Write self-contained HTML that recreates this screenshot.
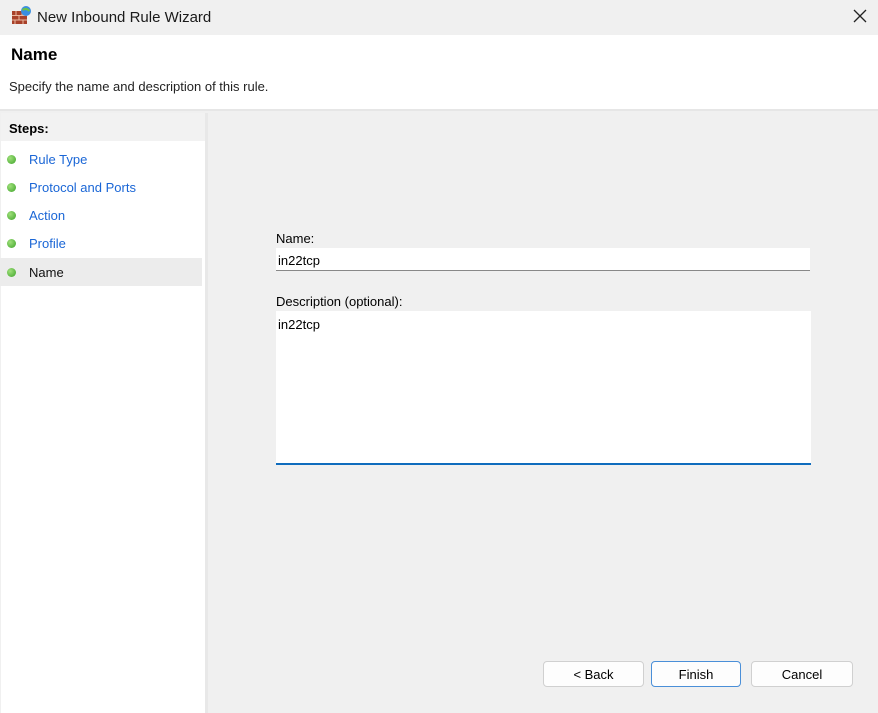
<!DOCTYPE html>
<html><head><style>
*{margin:0;padding:0;box-sizing:border-box}
body{width:878px;height:713px;background:#f0f0f0;font-family:"Liberation Sans",sans-serif;font-size:13px;color:#000;position:relative;overflow:hidden}
.a{position:absolute}
.t{white-space:nowrap}
.step{position:absolute;left:0;width:202px;height:28px;}
.step .d{position:absolute;left:7px;top:10px;width:9px;height:9px;border-radius:50%;background:radial-gradient(circle at 35% 35%,#9fe07a,#3ea32a)}
.step span{position:absolute;left:29px;top:7px;color:#1a66d6;font-size:13px}
.btn{position:absolute;top:661px;height:26px;background:#fdfdfd;border:1px solid #d0d0d0;border-radius:4px;text-align:center;line-height:25px;font-size:13px}
</style></head><body>
<div class="a" style="left:0;top:0;width:878px;height:35px;background:#f0f0f0"></div>
<svg class="a" style="left:11px;top:5px" width="22" height="20" viewBox="0 0 22 20">
<rect x="1" y="6" width="15" height="13" fill="#a8412a"/>
<path d="M1 10.5h15M1 15h15M5 6v4.5M11 6v4.5M8 10.5v4.5M4 15v4M12 15v4" stroke="#e9b8a0" stroke-width="1"/>
<circle cx="15" cy="6" r="5" fill="#3a8ee0"/><path d="M11.5 5q3.5 -2.5 7 1" stroke="#6bc24a" stroke-width="2" fill="none"/>
</svg>
<div class="a t" style="left:37px;top:9px;font-size:15px;color:#1a1a1a">New Inbound Rule Wizard</div>
<svg class="a" style="left:853px;top:9px" width="14" height="14"><path d="M1 1L13 13M13 1L1 13" stroke="#222" stroke-width="1.3"/></svg>
<div class="a" style="left:0;top:35px;width:878px;height:74px;background:#fff"></div>
<div class="a t" style="left:11px;top:45px;font-size:17px;font-weight:bold">Name</div>
<div class="a t" style="left:9px;top:79px;font-size:13px;color:#222">Specify the name and description of this rule.</div>
<div class="a" style="left:0;top:109px;width:878px;height:2px;background:#e6e6e6"></div>
<div class="a" style="left:1px;top:113px;width:204px;height:600px;background:#fff"></div>
<div class="a" style="left:1px;top:113px;width:204px;height:28px;background:#f2f2f2"></div>
<div class="a" style="left:205px;top:113px;width:3px;height:600px;background:#e8e8e8"></div>
<div class="a t" style="left:9px;top:121px;font-weight:bold;font-size:13px">Steps:</div>
<div class="step" style="top:145px"><div class="d"></div><span>Rule Type</span></div>
<div class="step" style="top:173px"><div class="d"></div><span>Protocol and Ports</span></div>
<div class="step" style="top:201px"><div class="d"></div><span>Action</span></div>
<div class="step" style="top:229px"><div class="d"></div><span>Profile</span></div>
<div class="step" style="top:258px;background:#ececec"><div class="d"></div><span style="color:#111">Name</span></div>
<div class="a t" style="left:276px;top:231px">Name:</div>
<div class="a" style="left:276px;top:248px;width:534px;height:23px;background:#fff;border-bottom:1px solid #888"></div>
<div class="a t" style="left:278px;top:253px">in22tcp</div>
<div class="a t" style="left:276px;top:294px">Description (optional):</div>
<div class="a" style="left:276px;top:311px;width:535px;height:154px;background:#fff;border-bottom:2px solid #0f6cbd"></div>
<div class="a t" style="left:278px;top:317px">in22tcp</div>
<div class="btn" style="left:543px;width:101px">&lt; Back</div>
<div class="btn" style="left:651px;width:90px;border-color:#4a8fd8">Finish</div>
<div class="btn" style="left:751px;width:102px">Cancel</div>
</body></html>
